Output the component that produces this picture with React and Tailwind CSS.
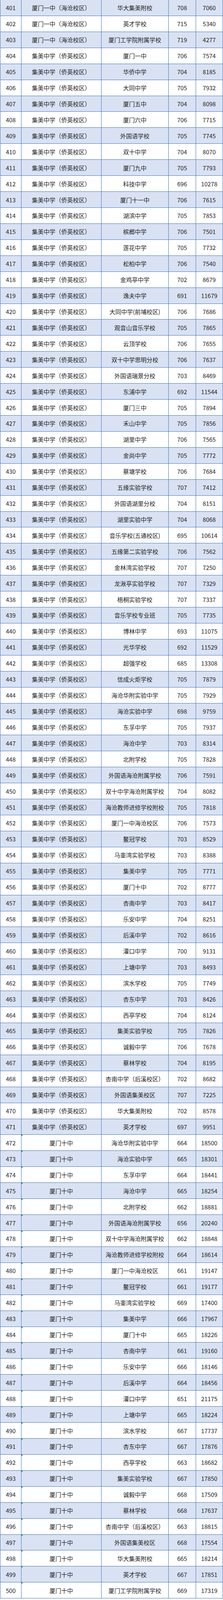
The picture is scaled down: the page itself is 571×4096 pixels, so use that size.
import React from "react";

const A = "厦门一中（海沧校区）";
const B = "集美中学（侨英校区）";
const C = "厦门十中";

const raw = [
  [A, "华大集美附校", 708, 7060],
  [A, "英才学校", 715, 5340],
  [A, "厦门工学院附属学校", 719, 4277],
  [B, "厦门一中", 706, 7574],
  [B, "华侨中学", 704, 8185],
  [B, "大同中学", 705, 7932],
  [B, "厦门五中", 704, 8098],
  [B, "厦门六中", 706, 7715],
  [B, "外国语学校", 705, 7745],
  [B, "双十中学", 704, 8070],
  [B, "厦门九中", 705, 7793],
  [B, "科技中学", 696, 10278],
  [B, "厦门十一中", 706, 7615],
  [B, "湖滨中学", 705, 7853],
  [B, "槟榔中学", 706, 7501],
  [B, "莲花中学", 705, 7732],
  [B, "松柏中学", 706, 7540],
  [B, "金鸡亭中学", 702, 8679],
  [B, "逸夫中学", 691, 11679],
  [B, "大同中学(前埔校区)", 706, 7686],
  [B, "观音山音乐学校", 705, 7865],
  [B, "云顶学校", 706, 7655],
  [B, "双十中学思明分校", 706, 7637],
  [B, "外国语瑞景分校", 703, 8469],
  [B, "东浦中学", 692, 11544],
  [B, "厦门三中", 705, 7894],
  [B, "禾山中学", 705, 7856],
  [B, "湖里中学", 706, 7565],
  [B, "金尚中学", 705, 7772],
  [B, "蔡塘学校", 706, 7684],
  [B, "五缘实验学校", 707, 7412],
  [B, "外国语湖里分校", 704, 8151],
  [B, "湖里实验中学", 704, 8068],
  [B, "音乐学校(五通校区)", 695, 10614],
  [B, "五缘第二实验学校", 706, 7562],
  [B, "金林湾实验学校", 707, 7250],
  [B, "龙湫亭实验学校", 707, 7329],
  [B, "梧桐实验学校", 707, 7337],
  [B, "音乐学校专业班", 705, 7735],
  [B, "博林中学", 693, 11075],
  [B, "光华学校", 692, 11529],
  [B, "超强学校", 685, 13308],
  [B, "信成火炬学校", 705, 7879],
  [B, "海沧华附实验中学", 705, 7929],
  [B, "海沧实验中学", 698, 9759],
  [B, "东孚中学", 705, 7937],
  [B, "海沧中学", 703, 8314],
  [B, "北附学校", 705, 7828],
  [B, "外国语海沧附属学校", 706, 7591],
  [B, "双十中学海沧附属学校", 704, 8082],
  [B, "海沧教师进修学校附校", 705, 7818],
  [B, "厦门一中海沧校区", 706, 7573],
  [B, "鳌冠学校", 703, 8529],
  [B, "马銮湾实验学校", 703, 8388],
  [B, "集美中学", 705, 7771],
  [B, "厦门十中", 702, 8777],
  [B, "杏南中学", 703, 8417],
  [B, "乐安中学", 704, 8251],
  [B, "后溪中学", 702, 8616],
  [B, "灌口中学", 700, 9131],
  [B, "上塘中学", 703, 8493],
  [B, "滨水学校", 705, 7749],
  [B, "杏东中学", 703, 8426],
  [B, "西亭学校", 704, 8124],
  [B, "集美实验学校", 705, 7826],
  [B, "诚毅中学", 706, 7678],
  [B, "蔡林学校", 704, 8195],
  [B, "杏南中学（后溪校区）", 702, 8682],
  [B, "外国语集美校区", 707, 7225],
  [B, "华大集美附校", 702, 8578],
  [B, "英才学校", 697, 9951],
  [C, "海沧华附实验中学", 664, 18500],
  [C, "海沧实验中学", 665, 18301],
  [C, "东孚中学", 664, 18441],
  [C, "海沧中学", 665, 18254],
  [C, "北附学校", 662, 18881],
  [C, "外国语海沧附属学校", 656, 20240],
  [C, "双十中学海沧附属学校", 662, 18848],
  [C, "海沧教师进修学校附校", 664, 18614],
  [C, "厦门一中海沧校区", 661, 19147],
  [C, "鳌冠学校", 661, 19177],
  [C, "马銮湾实验学校", 669, 17400],
  [C, "集美中学", 666, 17967],
  [C, "厦门十中", 665, 18226],
  [C, "杏南中学", 661, 19160],
  [C, "乐安中学", 666, 18146],
  [C, "后溪中学", 664, 18456],
  [C, "灌口中学", 651, 21175],
  [C, "上塘中学", 665, 18224],
  [C, "滨水学校", 667, 17737],
  [C, "杏东中学", 667, 17876],
  [C, "西亭学校", 663, 18682],
  [C, "集美实验学校", 667, 17850],
  [C, "诚毅中学", 668, 17509],
  [C, "蔡林学校", 668, 17637],
  [C, "杏南中学（后溪校区）", 663, 18815],
  [C, "外国语集美校区", 668, 17554],
  [C, "华大集美附校", 665, 18214],
  [C, "英才学校", 667, 17851],
  [C, "厦门工学院附属学校", 669, 17319],
];

export default function App() {
  return (
    <div
      className="w-[571px] bg-white text-[#222222] text-[15px] leading-none"
      style={{ fontFamily: '"Noto Sans CJK SC", "Noto Sans", sans-serif' }}
    >
      <div className="w-[571px] border-l border-[#4472c4]">
        {raw.map((r, i) => {
          const num = 401 + i;
          const odd = i % 2 === 0;
          return (
            <div
              key={num}
              className={`flex h-[40.93px] border-b border-[#4472c4] ${odd ? "bg-[#d9e2f3]" : "bg-white"}`}
            >
              <div className="w-[54px] shrink-0 flex items-center justify-center border-r border-[#4472c4]">
                {num}
              </div>
              <div className="relative w-[204.5px] shrink-0 flex items-center justify-center border-r border-[#4472c4] whitespace-nowrap">
                {num >= 472 && (
                  <span className="absolute left-0 top-0 w-0 h-0 border-t-[4px] border-r-[4px] border-t-[#2e8b3e] border-r-transparent" />
                )}
                {r[0]}
              </div>
              <div className="w-[172.5px] shrink-0 flex items-center justify-center border-r border-[#4472c4] whitespace-nowrap">
                {r[1]}
              </div>
              <div className="w-[69.5px] shrink-0 flex items-center justify-center border-r border-[#4472c4]">
                {r[2]}
              </div>
              <div className="w-[69.5px] shrink-0 flex items-center justify-center border-r border-[#4472c4]">
                {r[3]}
              </div>
            </div>
          );
        })}
      </div>
    </div>
  );
}
